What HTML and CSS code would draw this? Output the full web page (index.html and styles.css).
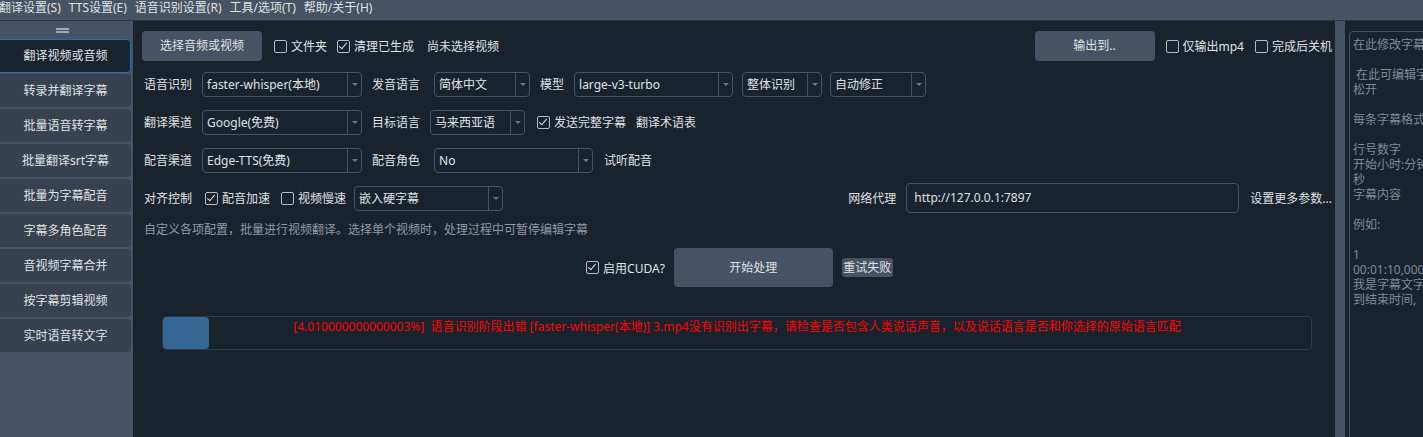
FILE: index.html
```html
<!DOCTYPE html>
<html lang="zh-CN">
<head>
    <meta charset="UTF-8">
    <title>pyVideoTrans</title>
    <link rel="stylesheet" href="styles.css">
</head>
<body>
    <div class="menubar">
        <span>翻译设置(S)</span>
        <span>TTS设置(E)</span>
        <span>语音识别设置(R)</span>
        <span>工具/选项(T)</span>
        <span>帮助/关于(H)</span>
    </div>

    <div class="app">
        <aside class="sidebar">
            <div class="handle"></div>
            <div class="side-btn active">翻译视频或音频</div>
            <div class="side-btn">转录并翻译字幕</div>
            <div class="side-btn">批量语音转字幕</div>
            <div class="side-btn">批量翻译srt字幕</div>
            <div class="side-btn">批量为字幕配音</div>
            <div class="side-btn">字幕多角色配音</div>
            <div class="side-btn">音视频字幕合并</div>
            <div class="side-btn">按字幕剪辑视频</div>
            <div class="side-btn">实时语音转文字</div>
        </aside>

        <main class="main">
            <div class="row">
                <div class="btn btn-wide">选择音频或视频</div>
                <label class="check ml2"><span class="box"></span>文件夹</label>
                <label class="check"><span class="box on"></span>清理已生成</label>
                <span class="label ml3">尚未选择视频</span>

                <div class="right">
                    <div class="btn btn-wide">输出到..</div>
                    <label class="check ml1"><span class="box"></span>仅输出mp4</label>
                    <label class="check ml1"><span class="box"></span>完成后关机</label>
                </div>
            </div>

            <div class="row">
                <span class="label">语音识别</span>
                <div class="combo w160"><span class="val">faster-whisper(本地)</span><span class="arrow"></span></div>
                <span class="label">发音语言</span>
                <div class="combo w96 ml4"><span class="val">简体中文</span><span class="arrow"></span></div>
                <span class="label">模型</span>
                <div class="combo w159"><span class="val">large-v3-turbo</span><span class="arrow"></span></div>
                <div class="combo w80 mln1"><span class="val">整体识别</span><span class="arrow"></span></div>
                <div class="combo w96 mln2"><span class="val">自动修正</span><span class="arrow"></span></div>
            </div>

            <div class="row">
                <span class="label">翻译渠道</span>
                <div class="combo w160"><span class="val">Google(免费)</span><span class="arrow"></span></div>
                <span class="label">目标语言</span>
                <div class="combo w95"><span class="val">马来西亚语</span><span class="arrow"></span></div>
                <label class="check ml2"><span class="box on"></span>发送完整字幕</label>
                <span class="label">翻译术语表</span>
            </div>

            <div class="row">
                <span class="label">配音渠道</span>
                <div class="combo w160"><span class="val">Edge-TTS(免费)</span><span class="arrow"></span></div>
                <span class="label">配音角色</span>
                <div class="combo w159 ml4"><span class="val">No</span><span class="arrow"></span></div>
                <span class="label ml1">试听配音</span>
            </div>

            <div class="row">
                <span class="label">对齐控制</span>
                <label class="check ml3"><span class="box on"></span>配音加速</label>
                <label class="check ml1"><span class="box"></span>视频慢速</label>
                <div class="combo w149 mln2"><span class="val">嵌入硬字幕</span><span class="arrow"></span></div>

                <div class="right">
                    <span class="label">网络代理</span>
                    <div class="input">http://127.0.0.1:7897</div>
                    <span class="label ml1">设置更多参数...</span>
                </div>
            </div>

            <p class="hint">自定义各项配置，批量进行视频翻译。选择单个视频时，处理过程中可暂停编辑字幕</p>

            <div class="actions">
                <label class="check"><span class="box on"></span>启用CUDA?</label>
                <div class="btn btn-start">开始处理</div>
                <div class="btn btn-small">重试失败</div>
            </div>

            <div class="progress">
                <div class="chunk" style="width: 4.01%"></div>
                <div class="progress-text">[4.010000000000003%]&nbsp;&nbsp;语音识别阶段出错 [faster-whisper(本地)] 3.mp4没有识别出字幕，请检查是否包含人类说话声音，以及说话语言是否和你选择的原始语言匹配</div>
            </div>
        </main>

        <div class="splitter"></div>

        <div class="editor">
            <div class="textbox">在此修改字幕

 在此可编辑字幕
松开

每条字幕格式

行号数字
开始小时:分钟
秒
字幕内容

例如:

1
00:01:10,000
我是字幕文字
到结束时间,</div>
        </div>
    </div>
</body>
</html>
```

FILE: styles.css
```css
body {
    margin: 0;
    width: 1423px;
    height: 437px;
    overflow: hidden;
    background-color: #19232D;
    color: #E0E1E3;
    font-family: "Noto Sans", "Noto Sans CJK SC", sans-serif;
    font-size: 12px;
}

.menubar {
    display: flex;
    gap: 8px;
    height: 20px;
    line-height: 15px;
    margin-left: -1px;
    background-color: #455364;
    border-bottom: 1px solid #2B3440;
    white-space: nowrap;
}

.app {
    display: flex;
    height: 416px;
}

/* 왼쪽 메뉴 */
.sidebar {
    width: 133px;
    flex-shrink: 0;
    background-color: #455364;
    display: flex;
    flex-direction: column;
}

.handle {
    height: 18px;
    position: relative;
}

.handle::before,
.handle::after {
    content: "";
    position: absolute;
    left: 56px;
    width: 13px;
    height: 2px;
    background-color: #9DA9B5;
}

.handle::before { top: 7px; }
.handle::after { top: 10px; }

.side-btn {
    height: 33px;
    margin: 0 2px 2px -4px;
    line-height: 33px;
    padding-left: 4px;
    text-align: center;
    background-color: #37414F;
    border-radius: 4px;
    box-sizing: border-box;
}

.side-btn.active {
    background-color: #19232D;
    border: 1px solid #1A72BB;
    line-height: 31px;
    height: 34px;
    margin-bottom: 1px;
}

/* 메인 영역 */
.main {
    flex: 1;
    padding: 6px 3px 0 9px;
    background-color: #19232D;
    display: flex;
    flex-direction: column;
    min-width: 0;
}

.row {
    display: flex;
    align-items: center;
    gap: 10px;
    height: 38px;
    white-space: nowrap;
}

.right {
    display: flex;
    align-items: center;
    gap: 10px;
    margin-left: auto;
}

.row > .label:first-child {
    margin-left: 2px;
}

.ml1 { margin-left: 1px; }
.ml2 { margin-left: 2px; }
.ml3 { margin-left: 3px; }
.ml4 { margin-left: 4px; }
.mln1 { margin-left: -1px; }
.mln2 { margin-left: -2px; }

.btn {
    background-color: #455364;
    border-radius: 4px;
    text-align: center;
    box-sizing: border-box;
    white-space: nowrap;
}

.btn-wide {
    width: 120px;
    height: 30px;
    line-height: 30px;
}

.check {
    display: flex;
    align-items: center;
    gap: 4px;
}

.box {
    width: 13px;
    height: 13px;
    box-sizing: border-box;
    border: 1px solid #B4BCC4;
    border-radius: 2px;
    position: relative;
}

.box.on::after {
    content: "";
    position: absolute;
    left: 3px;
    top: 0;
    width: 3px;
    height: 7px;
    border-right: 1.5px solid #E0E1E3;
    border-bottom: 1.5px solid #E0E1E3;
    transform: rotate(40deg);
}

.combo {
    display: flex;
    height: 25px;
    box-sizing: border-box;
    border: 1px solid #455364;
    border-radius: 4px;
}

.combo .val {
    flex: 1;
    padding-left: 4px;
    line-height: 23px;
    overflow: hidden;
}

.combo .arrow {
    width: 13px;
    border-left: 1px solid #455364;
    display: flex;
    align-items: center;
    justify-content: center;
}

.combo .arrow::after {
    content: "";
    border-left: 3px solid transparent;
    border-right: 3px solid transparent;
    border-top: 3px solid #6C7885;
}

.w80 { width: 80px; }
.w95 { width: 95px; }
.w96 { width: 96px; }
.w149 { width: 149px; }
.w159 { width: 159px; }
.w160 { width: 160px; }

.input {
    width: 333px;
    height: 30px;
    line-height: 28px;
    padding-left: 7px;
    box-sizing: border-box;
    border: 1px solid #455364;
    border-radius: 4px;
}

.hint {
    margin: 0 0 0 2px;
    height: 26px;
    line-height: 26px;
    color: #8E99A4;
}

.actions {
    display: flex;
    align-items: center;
    justify-content: center;
    gap: 9px;
    height: 39px;
    margin-top: 5px;
    padding-left: 5px;
}

.btn-start {
    width: 159px;
    height: 39px;
    line-height: 39px;
}

.btn-small {
    width: 51px;
    height: 19px;
    line-height: 19px;
    border-radius: 3px;
}

/* 진행 바 */
.progress {
    position: relative;
    margin: 29px 0 0 20px;
    width: 1150px;
    height: 34px;
    box-sizing: border-box;
    border: 1px solid #303C49;
    border-radius: 4px;
}

.chunk {
    position: absolute;
    left: 0;
    top: 0;
    bottom: 0;
    background-color: #346792;
    border-radius: 4px;
}

.progress-text {
    position: relative;
    padding-top: 2px;
    line-height: 16px;
    text-align: center;
    color: #FF0000;
    white-space: nowrap;
}

.splitter {
    width: 10px;
    flex-shrink: 0;
    background-color: #455364;
}

.editor {
    width: 78px;
    flex-shrink: 0;
    padding: 10px 0 0 4px;
    overflow: hidden;
    box-sizing: border-box;
}

.textbox {
    width: 120px;
    height: 430px;
    box-sizing: border-box;
    border: 1px solid #455364;
    border-radius: 4px;
    padding: 5px 3px;
    line-height: 15px;
    color: #7F8B96;
    white-space: pre;
    overflow: hidden;
}
```
